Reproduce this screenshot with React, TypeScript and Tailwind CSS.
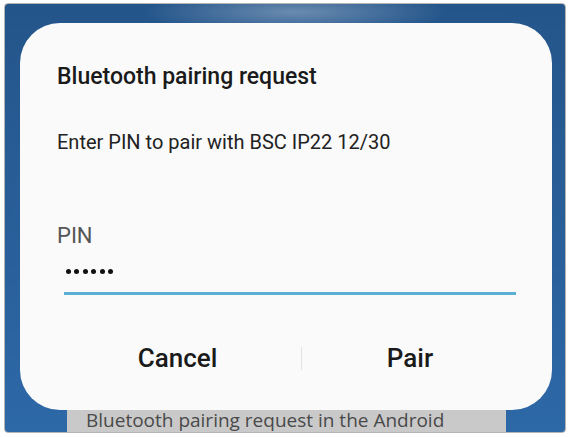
export default function App() {
  const dots = [0, 1, 2, 3, 4, 5];

  return (
    <div className="w-[570px] h-[437px] bg-white pt-[3px] pl-[4px] pr-[4px] font-['Roboto',sans-serif]">
      {/* Blue frame */}
      <div className="relative h-[430px] rounded-[4px] border border-[#b4b4b4] bg-gradient-to-b from-[#24558a] to-[#2d68a7] overflow-hidden">
        {/* top glow */}
        <div className="absolute left-[140px] top-[-14px] w-[300px] h-[44px] bg-[radial-gradient(ellipse_at_center,rgba(255,255,255,0.32),rgba(255,255,255,0.12)_45%,rgba(255,255,255,0)_72%)]" />

        {/* Dialog card */}
        <div className="relative mt-[19px] ml-[15px] w-[532px] h-[387px] rounded-[40px] bg-[#fafafa] pt-[40px]">
          <h1 className="pl-[37px] text-[23px] leading-[28px] font-medium text-[#1a1a1a]">
            Bluetooth pairing request
          </h1>
          <p className="pl-[37px] mt-[39px] text-[20px] leading-[24px] text-[#222]">
            Enter PIN to pair with BSC IP22 12/30
          </p>

          <div className="pl-[37px] mt-[69px] text-[22px] leading-[26px] text-[#555]">PIN</div>

          {/* masked input */}
          <div className="ml-[46px] mt-[20px] flex gap-[3.4px]">
            {dots.map((d) => (
              <div key={d} className="w-[5px] h-[5px] rounded-full bg-[#111]" />
            ))}
          </div>
          <div className="ml-[44px] mt-[18px] w-[452px] h-[3px] bg-[#5aafd3]" />

          {/* actions */}
          <div className="ml-[34px] mt-[48px] flex items-center text-[26px] leading-[30px] font-medium text-[#1a1a1a]">
            <button className="w-[247px] text-center">Cancel</button>
            <div className="w-px h-[23px] bg-[#e2e2e2]" />
            <button className="w-[216px] text-center">Pair</button>
          </div>
        </div>

        {/* caption strip */}
        <div className="ml-[62px] w-[439px] h-[22px] bg-[#c9c9c9] pl-[19px] font-['Open_Sans',sans-serif] text-[19px] leading-[21px] text-[#4a4a4a]">
          Bluetooth pairing request in the Android
        </div>
      </div>
    </div>
  );
}
